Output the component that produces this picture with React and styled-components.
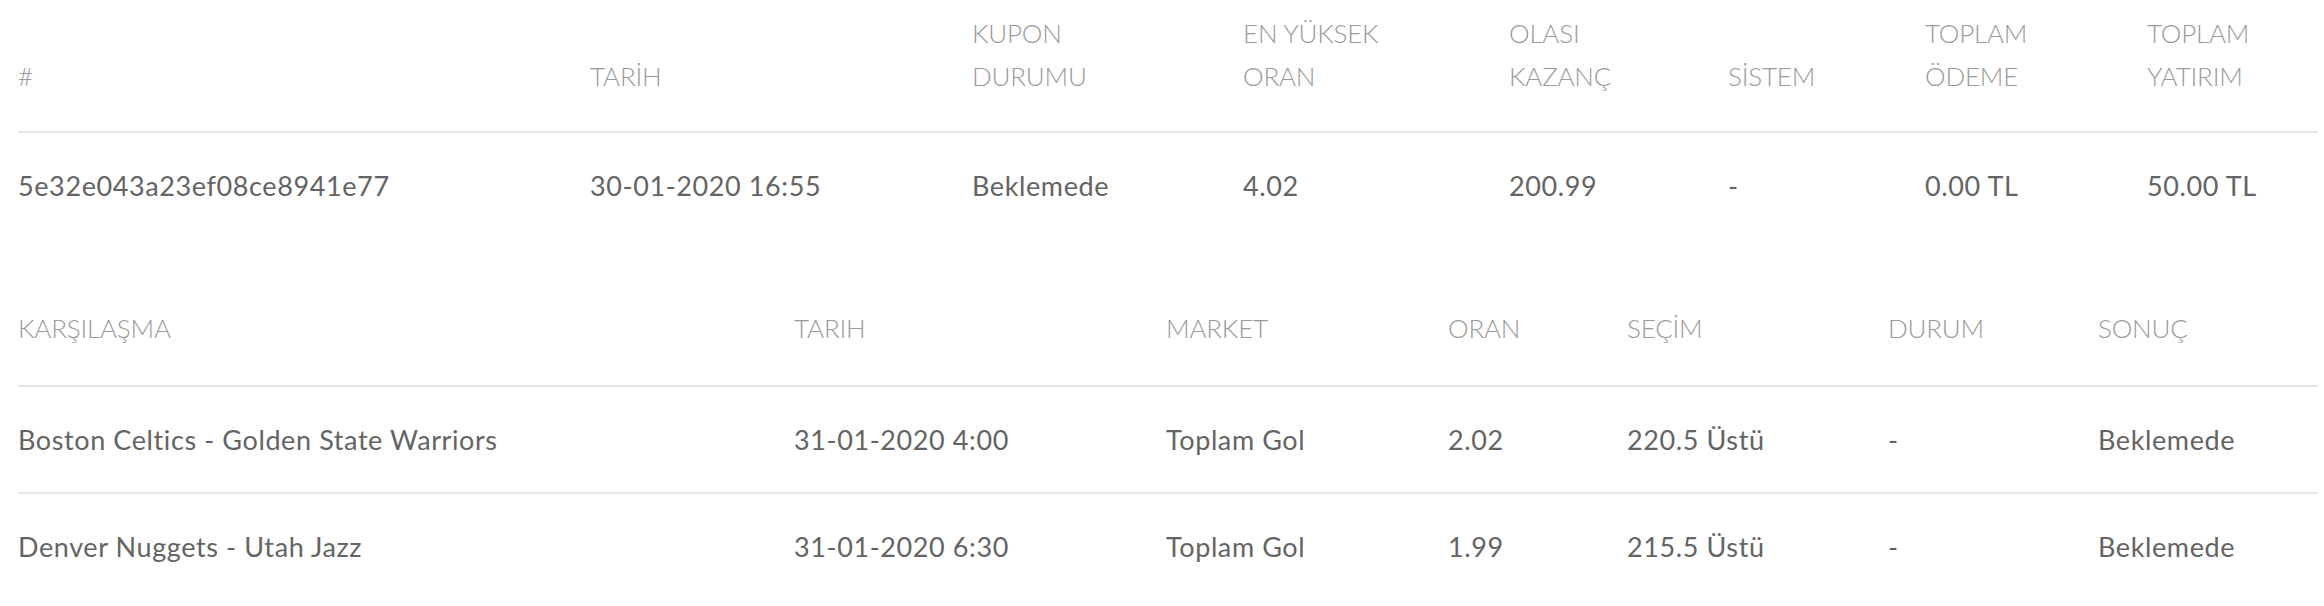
import styled, { createGlobalStyle } from 'styled-components';

const GlobalStyle = createGlobalStyle`
  html, body {
    margin: 0;
    padding: 0;
    background: #ffffff;
  }
  body {
    font-family: Lato, "Noto Sans", "Liberation Sans", sans-serif;
    -webkit-font-smoothing: antialiased;
  }
`;

const COUPON_COLS = '572px 382px 271px 266px 219px 197px 222px 171px';
const MATCH_COLS = '776px 372px 282px 179px 261px 210px 220px';

const couponHead = [
  '#',
  'TARİH',
  ['KUPON', 'DURUMU'],
  ['EN YÜKSEK', 'ORAN'],
  ['OLASI', 'KAZANÇ'],
  'SİSTEM',
  ['TOPLAM', 'ÖDEME'],
  ['TOPLAM', 'YATIRIM'],
];

const couponRows = [
  [
    '5e32e043a23ef08ce8941e77',
    '30-01-2020 16:55',
    'Beklemede',
    '4.02',
    '200.99',
    '-',
    '0.00 TL',
    '50.00 TL',
  ],
];

const matchHead = ['KARŞILAŞMA', 'TARIH', 'MARKET', 'ORAN', 'SEÇİM', 'DURUM', 'SONUÇ'];

const matchRows = [
  [
    'Boston Celtics - Golden State Warriors',
    '31-01-2020 4:00',
    'Toplam Gol',
    '2.02',
    '220.5 Üstü',
    '-',
    'Beklemede',
  ],
  [
    'Denver Nuggets - Utah Jazz',
    '31-01-2020 6:30',
    'Toplam Gol',
    '1.99',
    '215.5 Üstü',
    '-',
    'Beklemede',
  ],
];

const DataTable = ({ cols, head, rows, headTop, headBottom }) => (
  <Table>
    <HeadRow cols={cols} top={headTop} bottom={headBottom}>
      {head.map((h, i) => (
        <HeadCell key={i}>
          {Array.isArray(h) ? h.map((line) => <span key={line}>{line}</span>) : h}
        </HeadCell>
      ))}
    </HeadRow>
    {rows.map((row, r) => (
      <Row key={r} cols={cols}>
        {row.map((val, i) => (
          <Cell key={i}>{val}</Cell>
        ))}
      </Row>
    ))}
  </Table>
);

export default function App() {
  return (
    <>
      <GlobalStyle />
      <Page>
        <DataTable
          cols={COUPON_COLS}
          head={couponHead}
          rows={couponRows}
          headTop={12}
          headBottom={33}
        />
        <DataTable
          cols={MATCH_COLS}
          head={matchHead}
          rows={matchRows}
          headTop={33}
          headBottom={35}
        />
      </Page>
    </>
  );
}

const Page = styled.div`
  padding-left: 18px;
  display: flex;
  flex-direction: column;
  gap: 36px;
`;

const Table = styled.div`
  width: 2300px;
`;

const HeadRow = styled.div`
  display: grid;
  grid-template-columns: ${({ cols }) => cols};
  align-items: end;
  padding: ${({ top }) => top}px 0 ${({ bottom }) => bottom}px;
  border-bottom: 2px solid #e6e6e6;
`;

const HeadCell = styled.div`
  display: flex;
  flex-direction: column;
  font-size: 26px;
  font-weight: 300;
  line-height: 43px;
  letter-spacing: -0.2px;
  color: #9a9a9a;
  white-space: nowrap;
`;

const Row = styled.div`
  display: grid;
  grid-template-columns: ${({ cols }) => cols};
  align-items: center;
  padding: 31px 0;

  & + & {
    border-top: 2px solid #e6e6e6;
  }
`;

const Cell = styled.div`
  font-size: 27px;
  font-weight: 400;
  line-height: 43px;
  letter-spacing: 0.6px;
  color: #646464;
  white-space: nowrap;
`;
